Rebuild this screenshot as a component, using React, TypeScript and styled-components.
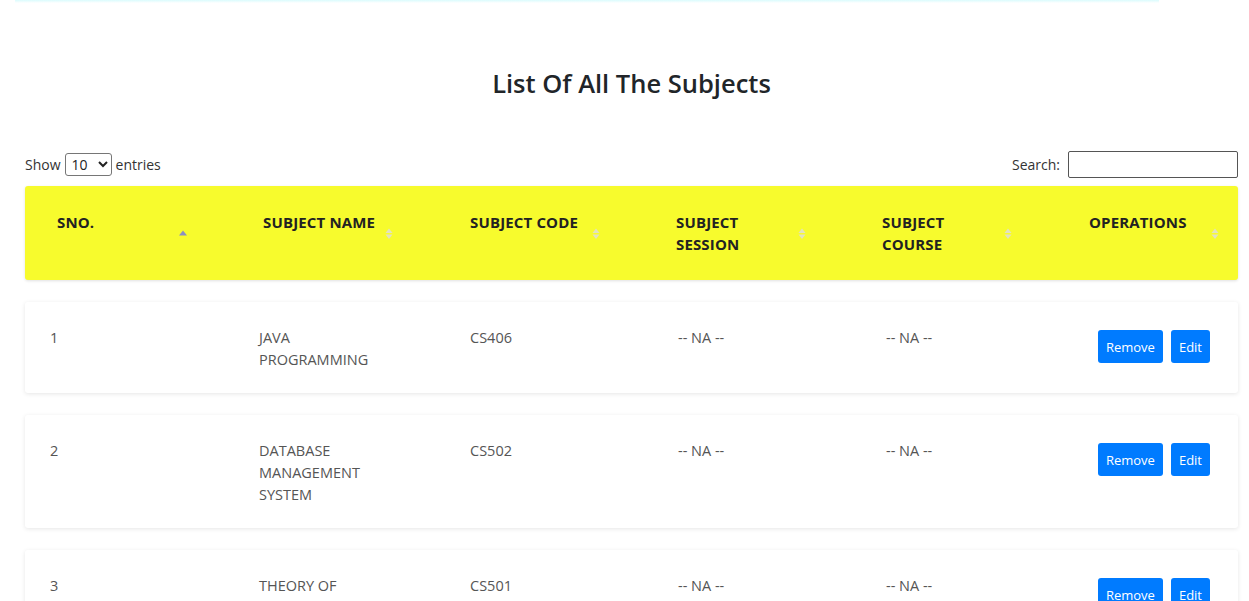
import React from "react";
import styled, { createGlobalStyle } from "styled-components";

const GlobalStyle = createGlobalStyle`
  html, body { margin: 0; padding: 0; background: #fff; }
  body { font-family: "Open Sans", "Noto Sans", sans-serif; color: #333; }
  * { box-sizing: border-box; }
`;

const TopGlow = styled.div`
  height: 3px;
  margin: 0 90px 0 15px;
  background: linear-gradient(to bottom, rgba(150, 245, 250, 0.35), rgba(255, 255, 255, 0));
`;

const Page = styled.main`
  padding: 0 11px 40px 25px;
`;

const Title = styled.h2`
  margin: 64px 0 0;
  text-align: center;
  font-size: 25.5px;
  line-height: 32px;
  font-weight: 600;
  color: #212529;
`;

const Controls = styled.div`
  margin-top: 52px;
  display: flex;
  justify-content: space-between;
  align-items: center;
  height: 27px;
  font-size: 14px;
  color: #333;
`;

const Label = styled.label`
  display: flex;
  align-items: center;
  gap: 4px;
`;

const Select = styled.select`
  height: 23px;
  width: 47px;
  font-family: "Open Sans", sans-serif;
  font-size: 14px;
  padding: 0 2px;
  border: 1px solid #767676;
  border-radius: 3px;
  background: #fff;
  color: #222;
`;

const SearchInput = styled.input`
  width: 170px;
  height: 27px;
  margin-left: 4px;
  border: 1px solid #555;
  border-radius: 2px;
  outline: none;
`;

const HeaderRow = styled.div`
  margin-top: 8px;
  display: grid;
  grid-template-columns: 206px 207px 206px 206px 207px 1fr;
  background: #f7fb2d;
  border-radius: 3px;
  box-shadow: 0 1px 3px rgba(0, 0, 0, 0.12);
  min-height: 94px;
`;

const HeadCell = styled.div`
  display: flex;
  align-items: flex-start;
  padding: 25px 0 24px 32px;
`;

const HeadLabel = styled.span`
  flex: 0 0 123px;
  font-size: 15px;
  line-height: 22px;
  font-weight: 700;
  letter-spacing: 0.15px;
  color: #222;
`;

const SortIcon = styled.svg`
  align-self: center;
  flex: 0 0 8px;
  margin-left: -1px;
`;

const BodyRow = styled.div`
  margin-top: 22px;
  display: grid;
  grid-template-columns: 209px 211px 208px 208px 208px 1fr;
  background: #fff;
  border-radius: 3px;
  box-shadow: 0 1px 4px rgba(0, 0, 0, 0.1);
`;

const Cell = styled.div`
  padding: 25px 10px 22px 25px;
  font-size: 14.5px;
  line-height: 22px;
  color: #555;
`;

const Wrap = styled.span`
  display: block;
  max-width: 130px;
`;

const OpsCell = styled.div`
  display: flex;
  align-items: flex-start;
  justify-content: flex-end;
  gap: 8px;
  padding: 28px 28px 0 0;
`;

const Button = styled.button`
  height: 33px;
  padding: 0 8px;
  border: none;
  border-radius: 3px;
  background: #007bff;
  color: #fff;
  font-family: "Open Sans", sans-serif;
  font-size: 13px;
  cursor: pointer;
`;

type Dir = "asc" | "both";

const Sort = ({ dir }: { dir: Dir }) =>
  dir === "asc" ? (
    <SortIcon width="8" height="12" viewBox="0 0 8 12">
      <polygon points="4,2.5 8,7.5 0,7.5" fill="#8a8fc2" />
    </SortIcon>
  ) : (
    <SortIcon width="8" height="12" viewBox="0 0 8 12">
      <polygon points="4,0.5 7.5,5 0.5,5" fill="#e2e2c0" />
      <polygon points="0.5,6.5 7.5,6.5 4,11" fill="#e2e2c0" />
    </SortIcon>
  );

const headers: { label: string; dir: Dir }[] = [
  { label: "SNO.", dir: "asc" },
  { label: "SUBJECT NAME", dir: "both" },
  { label: "SUBJECT CODE", dir: "both" },
  { label: "SUBJECT SESSION", dir: "both" },
  { label: "SUBJECT COURSE", dir: "both" },
  { label: "OPERATIONS", dir: "both" },
];

const subjects = [
  { sno: 1, name: "JAVA PROGRAMMING", code: "CS406" },
  { sno: 2, name: "DATABASE MANAGEMENT SYSTEM", code: "CS502" },
  { sno: 3, name: "THEORY OF COMPUTATION", code: "CS501" },
];

export default function App() {
  return (
    <>
      <GlobalStyle />
      <TopGlow />
      <Page>
        <Title>List Of All The Subjects</Title>
        <Controls>
          <Label>
            Show
            <Select defaultValue="10">
              <option value="10">10</option>
              <option value="25">25</option>
              <option value="50">50</option>
              <option value="100">100</option>
            </Select>
            entries
          </Label>
          <Label>
            Search:
            <SearchInput type="search" />
          </Label>
        </Controls>
        <HeaderRow>
          {headers.map((h) => (
            <HeadCell key={h.label}>
              <HeadLabel>{h.label}</HeadLabel>
              <Sort dir={h.dir} />
            </HeadCell>
          ))}
        </HeaderRow>
        {subjects.map((s) => (
          <BodyRow key={s.sno}>
            <Cell>{s.sno}</Cell>
            <Cell>
              <Wrap>{s.name}</Wrap>
            </Cell>
            <Cell>{s.code}</Cell>
            <Cell>-- NA --</Cell>
            <Cell>-- NA --</Cell>
            <OpsCell>
              <Button>Remove</Button>
              <Button>Edit</Button>
            </OpsCell>
          </BodyRow>
        ))}
      </Page>
    </>
  );
}
